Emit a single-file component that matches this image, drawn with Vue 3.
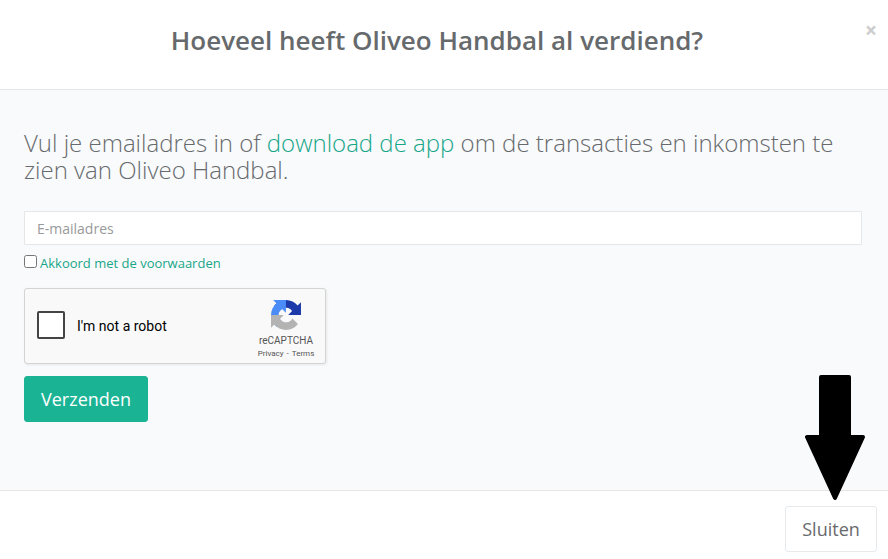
<template>
  <div class="modal">
    <header class="modal-header">
      <h4>{{ title }}</h4>
      <button type="button" class="close" aria-label="Sluiten">×</button>
    </header>

    <main class="modal-body">
      <h2>
        Vul je emailadres in of <a>download de app</a> om de transacties en inkomsten te zien van Oliveo Handbal.
      </h2>
      <input v-model="email" type="email" class="form-control" placeholder="E-mailadres">
      <div class="terms">
        <input v-model="accepted" type="checkbox">
        <a>Akkoord met de voorwaarden</a>
      </div>

      <div class="captcha">
        <span class="captcha-check"></span>
        <span class="captcha-label">I'm not a robot</span>
        <div class="captcha-brand">
          <svg class="captcha-logo" viewBox="0 0 64 64">
            <path fill="#1c3aa9" d="M64 31.955l-.033-1.37V4.687l-7.16 7.16C50.948 4.674 42.033.093 32.05.093c-10.4 0-19.622 4.96-25.458 12.64l11.736 11.86a15.55 15.55 0 0 1 4.754-5.334c2.05-1.6 4.952-2.906 8.968-2.906.485 0 .86.057 1.135.163 4.976.393 9.288 3.14 11.828 7.124l-8.307 8.307L64 31.953" />
            <path fill="#4a8df8" d="M31.862.094l-1.37.033H4.594l7.16 7.16C4.58 13.147 0 22.06 0 32.046c0 10.4 4.96 19.622 12.64 25.458L24.5 45.768a15.55 15.55 0 0 1-5.334-4.754c-1.6-2.05-2.906-4.952-2.906-8.968 0-.485.057-.86.163-1.135.393-4.976 3.14-9.288 7.124-11.828l8.307 8.307L31.86.095" />
            <path fill="#b3b3b3" d="M.001 32.045l.033 1.37v25.898l7.16-7.16c5.86 7.173 14.774 11.754 24.76 11.754 10.4 0 19.622-4.96 25.458-12.64l-11.736-11.86a15.55 15.55 0 0 1-4.754 5.334c-2.05 1.6-4.952 2.906-8.968 2.906-.485 0-.86-.057-1.135-.163-4.976-.393-9.288-3.14-11.828-7.124l8.307-8.307c-10.522.04-22.4.066-27.295-.005" />
          </svg>
          <span class="captcha-name">reCAPTCHA</span>
          <span class="captcha-links">Privacy<i>-</i>Terms</span>
        </div>
      </div>

      <button type="button" class="btn btn-primary">Verzenden</button>
    </main>

    <footer class="modal-footer">
      <button type="button" class="btn btn-white">Sluiten</button>
      <!-- pijl boven de sluitknop -->
      <svg class="arrow" viewBox="0 0 60 126">
        <path d="M16 2H44V62H58L30 123L2 62H16Z" />
      </svg>
    </footer>
  </div>
</template>

<script setup>
import { ref } from 'vue'

const title = 'Hoeveel heeft Oliveo Handbal al verdiend?'
const email = ref('')
const accepted = ref(false)
</script>

<style>
body {
    margin: 0;
    overflow: hidden;
}
</style>

<style scoped>
* {
    box-sizing: border-box;
}

.modal {
    display: flex;
    flex-direction: column;
    height: 559px;
    background: #fff;
    color: #676a6c;
    font-family: "Open Sans", "Liberation Sans", sans-serif;
    font-size: 13px;
}

/* Header */
.modal-header {
    display: grid;
    grid-template-columns: 10px 1fr 14px;
    align-items: start;
    height: 90px;
    padding: 22px 10px 0 0;
    border-bottom: 1px solid #e5e5e5;
}

.modal-header h4 {
    grid-column: 2;
    margin: 0;
    font-size: 26px;
    font-weight: 600;
    line-height: 37px;
    text-align: center;
    white-space: nowrap;
}

.close {
    padding: 0;
    border: 0;
    background: none;
    color: #ccc;
    font-family: inherit;
    font-size: 21px;
    font-weight: 700;
    line-height: 17px;
}

/* Body */
.modal-body {
    height: 400px;
    padding: 39px 26px 0 24px;
    background: #f9fafc;
}

.modal-body h2 {
    margin: 0 0 28px;
    font-size: 24px;
    font-weight: 300;
    line-height: 27px;
}

a {
    color: #18a689;
}

.form-control {
    display: block;
    width: 100%;
    height: 34px;
    padding: 6px 12px;
    border: 1px solid #e5e6e7;
    border-radius: 1px;
    background: #fff;
    font-family: inherit;
    font-size: 14px;
}

.form-control::placeholder {
    color: #999;
}

.terms {
    display: flex;
    gap: 3px;
    height: 43px;
    padding-top: 9px;
    line-height: 19px;
}

.terms input {
    width: 13px;
    height: 13px;
    margin: 1px 0 0;
}

/* Captcha */
.captcha {
    display: flex;
    width: 302px;
    height: 76px;
    margin-bottom: 12px;
    border: 1px solid #d3d3d3;
    border-radius: 3px;
    background: #f9f9f9;
    box-shadow: 1px 1px 3px rgba(0, 0, 0, 0.08);
    color: #000;
    font-family: Roboto, sans-serif;
}

.captcha-check {
    width: 28px;
    height: 28px;
    margin: 22px 12px 0;
    border: 2px solid #444;
    border-radius: 2px;
    background: #fff;
}

.captcha-label {
    flex: 1;
    font-size: 14px;
    line-height: 74px;
}

.captcha-brand {
    display: flex;
    flex-direction: column;
    align-items: center;
    width: 78px;
    padding-top: 11px;
    color: #555;
}

.captcha-logo {
    width: 30px;
    height: 30px;
}

.captcha-name {
    margin-top: 4px;
    font-size: 10px;
    line-height: 13px;
}

.captcha-links {
    margin-top: 1px;
    font-size: 8px;
    line-height: 12px;
}

.captcha-links i {
    padding: 0 3px;
    font-style: normal;
}

/* Knoppen */
.btn {
    display: block;
    height: 46px;
    padding: 0 16px;
    border: 1px solid;
    border-radius: 3px;
    font-family: inherit;
    font-size: 18px;
    line-height: 24px;
}

.btn-primary {
    width: 124px;
    border-color: #1ab394;
    background: #1ab394;
    color: #fff;
}

.btn-white {
    width: 92px;
    border-color: #e7eaec;
    background: #fff;
    color: #676a6c;
}

/* Footer */
.modal-footer {
    position: relative;
    display: flex;
    flex: 1;
    justify-content: flex-end;
    padding: 15px 11px 0;
    border-top: 1px solid #e5e5e5;
}

.arrow {
    position: absolute;
    right: 23px;
    bottom: 58px;
    width: 60px;
    height: 126px;
    stroke: #000;
    stroke-width: 4;
    stroke-linejoin: round;
}
</style>
